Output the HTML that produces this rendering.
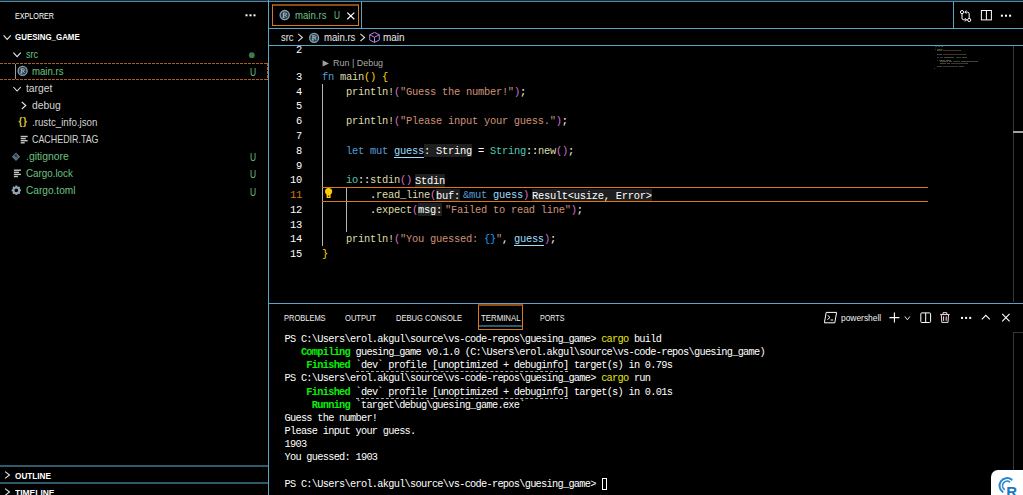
<!DOCTYPE html>
<html>
<head>
<meta charset="utf-8">
<title>main.rs - guesing_game</title>
<style>
*{box-sizing:border-box;margin:0;padding:0}
html,body{width:1023px;height:495px;overflow:hidden;background:#000;}
body{position:relative;font-family:"Liberation Sans",sans-serif;color:#fff;font-size:11px;}
.abs{position:absolute}
.ln{position:absolute;background:#5ba6c8}
.t{position:absolute;white-space:pre;line-height:1}
.sx{display:inline-block;transform-origin:0 50%;white-space:pre}
.row{position:absolute;left:0;width:268px;height:17px;font-size:11.5px;line-height:17px;white-space:pre}
.row .lbl{position:absolute;top:0;display:inline-block;transform:scaleX(.885);transform-origin:0 50%}
.g{color:#6cc080}
.badge{position:absolute;left:250px;top:0;font-size:10px;color:#6cc080}
.code{position:absolute;left:322px;font-family:"Liberation Mono",monospace;font-size:10.4px;letter-spacing:-0.24px;line-height:14.78px;height:14.78px;white-space:pre;color:#fff}
.num{position:absolute;left:270px;width:32px;text-align:right;font-family:"Liberation Mono",monospace;font-size:10.4px;letter-spacing:-0.24px;line-height:14.78px;height:14.78px;color:#fff}
.num.act{color:#d87a18}
.k{color:#569cd6}.s{color:#ce9178}.f{color:#dcdcaa}.ty{color:#4ec9b0}.v{color:#9cdcfe}
.b1{color:#ffd700}.b2{color:#da70d6}.b3{color:#179fff}
.hint{background:#1f1f1f;color:#fff;padding:0.5px 0}
.u{border-bottom:1px solid #9cdcfe}
.ml{margin-left:3px}.mr{margin-right:3px}
.term{position:absolute;left:284.5px;font-family:"Liberation Mono",monospace;font-size:10.3px;letter-spacing:-0.72px;line-height:13px;height:13px;white-space:pre;color:#fff}
.tg{color:#08f008;font-weight:bold}.ty2{color:#e5e510}
.du{border-bottom:1px dashed #aaa}
.cur{display:inline-block;width:5px;height:12px;border:1px solid #fff;vertical-align:-3px;margin-left:1px}
.ptab{position:absolute;top:313px;font-size:8.5px;line-height:10px;letter-spacing:-0.1px;color:#fff;white-space:pre}
svg{position:absolute;overflow:visible}
</style>
</head>
<body>
<div class="ln" style="left:0px;top:0px;width:1023px;height:1px;background:#1c2c34"></div>
<div class="ln" style="left:0px;top:1px;width:1023px;height:1px;background:#4b8ba6"></div>
<div class="ln" style="left:268px;top:0px;width:1px;height:495px"></div>
<div class="ln" style="left:269px;top:28px;width:754px;height:1px"></div>
<div class="ln" style="left:269px;top:45px;width:754px;height:1px"></div>
<div class="ln" style="left:269px;top:303px;width:754px;height:1px"></div>
<div class="ln" style="left:361px;top:2px;width:1px;height:26px"></div>
<div class="ln" style="left:953px;top:2px;width:1px;height:26px"></div>
<div class="ln" style="left:0px;top:465px;width:268px;height:2px;background:#2f5a6b"></div>
<div class="ln" style="left:0px;top:482px;width:268px;height:2px;background:#2f5a6b"></div>
<div class="t" style="left:15.00px;top:11.78px;font-size:9px;color:#fff;"><span class="sx" style="transform:scaleX(0.796)">EXPLORER</span></div>
<div class="t" style="left:15.00px;top:32.98px;font-size:9px;color:#fff;font-weight:bold;"><span class="sx" style="transform:scaleX(0.881)">GUESING_GAME</span></div>
<div class="t" style="left:25.70px;top:49.57px;font-size:10.2px;color:#6cc080;"><span class="sx" style="transform:scaleX(0.897)">src</span></div>
<div class="t" style="left:32.30px;top:66.67px;font-size:10.2px;color:#6cc080;"><span class="sx" style="transform:scaleX(0.945)">main.rs</span></div>
<div class="t" style="left:249.50px;top:68.18px;font-size:10.3px;color:#6cc080;"><span class="sx" style="transform:scaleX(0.820)">U</span></div>
<div class="t" style="left:26.00px;top:83.67px;font-size:10.2px;color:#d4d4d4;"><span class="sx" style="transform:scaleX(1.012)">target</span></div>
<div class="t" style="left:31.90px;top:100.67px;font-size:10.2px;color:#d4d4d4;"><span class="sx" style="transform:scaleX(1.015)">debug</span></div>
<div class="t" style="left:31.90px;top:117.87px;font-size:10.2px;color:#d4d4d4;"><span class="sx" style="transform:scaleX(0.955)">.rustc_info.json</span></div>
<div class="t" style="left:32.30px;top:134.97px;font-size:10.2px;color:#d4d4d4;"><span class="sx" style="transform:scaleX(0.873)">CACHEDIR.TAG</span></div>
<div class="t" style="left:25.70px;top:151.67px;font-size:10.2px;color:#6cc080;"><span class="sx" style="transform:scaleX(1.020)">.gitignore</span></div>
<div class="t" style="left:249.50px;top:153.18px;font-size:10.3px;color:#6cc080;"><span class="sx" style="transform:scaleX(0.820)">U</span></div>
<div class="t" style="left:25.70px;top:168.87px;font-size:10.2px;color:#6cc080;"><span class="sx" style="transform:scaleX(0.962)">Cargo.lock</span></div>
<div class="t" style="left:249.50px;top:170.38px;font-size:10.3px;color:#6cc080;"><span class="sx" style="transform:scaleX(0.820)">U</span></div>
<div class="t" style="left:25.70px;top:186.07px;font-size:10.2px;color:#6cc080;"><span class="sx" style="transform:scaleX(0.992)">Cargo.toml</span></div>
<div class="t" style="left:249.50px;top:187.58px;font-size:10.3px;color:#6cc080;"><span class="sx" style="transform:scaleX(0.820)">U</span></div>
<div class="t" style="left:15.00px;top:470.76px;font-size:9.5px;color:#fff;font-weight:bold;"><span class="sx" style="transform:scaleX(0.863)">OUTLINE</span></div>
<div class="t" style="left:15.00px;top:487.76px;font-size:9.5px;color:#fff;font-weight:bold;"><span class="sx" style="transform:scaleX(0.891)">TIMELINE</span></div>
<div class="abs" style="left:272px;top:4px;width:87px;height:22px;border:1px solid #d87a18;border-top:2px solid #8a4c10"></div>
<div class="t" style="left:294.50px;top:11.17px;font-size:10.2px;color:#6cc080;"><span class="sx" style="transform:scaleX(0.945)">main.rs</span></div>
<div class="t" style="left:333.60px;top:11.18px;font-size:10.3px;color:#6cc080;"><span class="sx" style="transform:scaleX(0.807)">U</span></div>
<div class="t" style="left:281.20px;top:33.23px;font-size:10px;color:#e8e8e8;"><span class="sx" style="transform:scaleX(0.938)">src</span></div>
<div class="t" style="left:323.80px;top:33.23px;font-size:10px;color:#e8e8e8;"><span class="sx" style="transform:scaleX(0.958)">main.rs</span></div>
<div class="t" style="left:383.20px;top:33.23px;font-size:10px;color:#e8e8e8;"><span class="sx" style="transform:scaleX(0.997)">main</span></div>
<div class="abs" style="left:322px;top:84px;width:1px;height:162px;background:#b4b4b4"></div>
<div class="abs" style="left:346px;top:188px;width:1px;height:44px;background:#b4b4b4"></div>
<div class="num" style="top:43.20px">2</div>
<div class="num" style="top:69.90px">3</div>
<div class="code" style="top:69.90px"><span class="k">fn</span> <span class="f">main</span><span class="b1">()</span> <span class="b1">{</span></div>
<div class="num" style="top:84.68px">4</div>
<div class="code" style="top:84.68px">    <span class="f">println!</span><span class="b2">(</span><span class="s">"Guess the number!"</span><span class="b2">)</span>;</div>
<div class="num" style="top:99.46px">5</div>
<div class="num" style="top:114.24px">6</div>
<div class="code" style="top:114.24px">    <span class="f">println!</span><span class="b2">(</span><span class="s">"Please input your guess."</span><span class="b2">)</span>;</div>
<div class="num" style="top:129.02px">7</div>
<div class="num" style="top:143.80px">8</div>
<div class="code" style="top:143.80px">    <span class="k">let</span> <span class="k">mut</span> <span class="v u">guess</span><span class="hint">: String</span> = <span class="ty">String</span>::<span class="f">new</span><span class="b2">()</span>;</div>
<div class="num" style="top:158.58px">9</div>
<div class="num" style="top:173.36px">10</div>
<div class="code" style="top:173.36px">    <span class="ty">io</span>::<span class="f">stdin</span><span class="b2">()</span><span class="hint ml">Stdin</span></div>
<div class="num act" style="top:188.14px">11</div>
<div class="code" style="top:188.14px">        .<span class="f">read_line</span><span class="b2">(</span><span class="hint mr">buf:</span><span class="k">&amp;mut</span> <span class="v u">guess</span><span class="b2">)</span><span class="hint ml">Result&lt;usize, Error&gt;</span></div>
<div class="num" style="top:202.92px">12</div>
<div class="code" style="top:202.92px">        .<span class="f">expect</span><span class="b2">(</span><span class="hint mr">msg:</span><span class="s">"Failed to read line"</span><span class="b2">)</span>;</div>
<div class="num" style="top:217.70px">13</div>
<div class="num" style="top:232.48px">14</div>
<div class="code" style="top:232.48px">    <span class="f">println!</span><span class="b2">(</span><span class="s">"You guessed: </span><span class="b3">{}</span><span class="s">"</span>, <span class="v u">guess</span><span class="b2">)</span>;</div>
<div class="num" style="top:247.26px">15</div>
<div class="code" style="top:247.26px"><span class="b1">}</span></div>
<div class="t" style="left:332.90px;top:57.97px;font-size:9.6px;color:#a8a8a8;"><span class="sx" style="transform:scaleX(0.933)">Run | Debug</span></div>
<div class="abs" style="left:322px;top:187px;width:606px;height:15px;border-top:1px solid #d87a18;border-bottom:1px solid #d87a18"></div>
<div class="term" style="top:333px">PS C:\Users\erol.akgul\source\vs-code-repos\guesing_game&gt; <span class="ty2">cargo</span> build</div>
<div class="term" style="top:346px">   <span class="tg">Compiling</span> guesing_game v0.1.0 (C:\Users\erol.akgul\source\vs-code-repos\guesing_game)</div>
<div class="term" style="top:359px">    <span class="tg">Finished</span> <span class="du">`dev` profile [unoptimized + debuginfo]</span> target(s) in 0.79s</div>
<div class="term" style="top:372px">PS C:\Users\erol.akgul\source\vs-code-repos\guesing_game&gt; <span class="ty2">cargo</span> run</div>
<div class="term" style="top:386px">    <span class="tg">Finished</span> <span class="du">`dev` profile [unoptimized + debuginfo]</span> target(s) in 0.01s</div>
<div class="term" style="top:399px">     <span class="tg">Running</span> `target\debug\guesing_game.exe`</div>
<div class="term" style="top:412px">Guess the number!</div>
<div class="term" style="top:425px">Please input your guess.</div>
<div class="term" style="top:438px">1903</div>
<div class="term" style="top:451px">You guessed: 1903</div>
<div class="term" style="top:478px">PS C:\Users\erol.akgul\source\vs-code-repos\guesing_game&gt; <span class="cur"></span></div>
<div class="t" style="left:284.40px;top:314.08px;font-size:9px;color:#f0f0f0;"><span class="sx" style="transform:scaleX(0.832)">PROBLEMS</span></div>
<div class="t" style="left:345.10px;top:314.08px;font-size:9px;color:#f0f0f0;"><span class="sx" style="transform:scaleX(0.841)">OUTPUT</span></div>
<div class="t" style="left:395.80px;top:314.08px;font-size:9px;color:#f0f0f0;"><span class="sx" style="transform:scaleX(0.841)">DEBUG CONSOLE</span></div>
<div class="t" style="left:480.90px;top:314.08px;font-size:9px;color:#f0f0f0;"><span class="sx" style="transform:scaleX(0.870)">TERMINAL</span></div>
<div class="t" style="left:539.50px;top:314.08px;font-size:9px;color:#f0f0f0;"><span class="sx" style="transform:scaleX(0.791)">PORTS</span></div>
<div class="abs" style="left:478px;top:304px;width:45px;height:26px;border:1px solid #d87a18;border-top:2px solid #8a4c10"></div>
<div class="abs" style="left:479px;top:325px;width:43px;height:2px;background:#2f5a6b"></div>
<div class="t" style="left:840.80px;top:314.25px;font-size:8.8px;color:#f0f0f0;"><span class="sx" style="transform:scaleX(0.956)">powershell</span></div>
<svg style="left:0px;top:0px" width="1" height="1" viewBox="0 0 1 1"><rect x="245.5" y="14.3" width="2" height="2" fill="#fff"/><rect x="249.5" y="14.3" width="2" height="2" fill="#fff"/><rect x="253.5" y="14.3" width="2" height="2" fill="#fff"/></svg>
<svg style="left:0px;top:0px" width="1" height="1" viewBox="0 0 1 1"><polyline points="3.6,35.4 7.2,39.4 10.8,35.4" fill="none" stroke="#e8e8e8" stroke-width="1.1"/></svg>
<svg style="left:0px;top:0px" width="1" height="1" viewBox="0 0 1 1"><polyline points="13.4,52.6 17.1,56.6 20.8,52.6" fill="none" stroke="#e8e8e8" stroke-width="1.1"/></svg>
<svg style="left:0px;top:0px" width="1" height="1" viewBox="0 0 1 1"><polyline points="13.4,87 17.1,91 20.8,87" fill="none" stroke="#e8e8e8" stroke-width="1.1"/></svg>
<svg style="left:0px;top:0px" width="1" height="1" viewBox="0 0 1 1"><polyline points="21.8,102 25.8,105.5 21.8,109" fill="none" stroke="#e8e8e8" stroke-width="1.1"/></svg>
<svg style="left:0px;top:0px" width="1" height="1" viewBox="0 0 1 1"><polyline points="5.1,471.6 9.5,475 5.1,478.4" fill="none" stroke="#e8e8e8" stroke-width="1.1"/></svg>
<svg style="left:0px;top:0px" width="1" height="1" viewBox="0 0 1 1"><polyline points="5.1,488.6 9.5,492 5.1,495.4" fill="none" stroke="#e8e8e8" stroke-width="1.1"/></svg>
<div class="abs" style="left:0;top:63px;width:268px;height:1px;background:repeating-linear-gradient(90deg,#b06014 0 3px,transparent 3px 4px)"></div>
<div class="abs" style="left:0;top:79px;width:268px;height:1px;background:repeating-linear-gradient(90deg,#b06014 0 3px,transparent 3px 4px)"></div>
<div class="abs" style="left:267px;top:63px;width:1px;height:17px;background:repeating-linear-gradient(180deg,#b06014 0 3px,transparent 3px 4px)"></div>
<div class="abs" style="left:15px;top:64px;width:1px;height:15px;background:#9a9a9a"></div>
<svg style="left:0px;top:0px" width="1" height="1" viewBox="0 0 1 1"><circle cx="251.8" cy="55.2" r="2.9" fill="#3d7a4e"/></svg>
<svg style="left:0px;top:0px" width="1" height="1" viewBox="0 0 1 1"><circle cx="22.6" cy="70.9" r="4.5" fill="#2b3e4a" stroke="#86a3b5" stroke-width="1.3"/><path d="M20.6 68.9 h2.8 a1 1 0 0 1 0 2 h-2.2 M21.4 68.9 v4.2 M23 70.9 l1.6 2.2 M20.2 73.1 h2.4" fill="none" stroke="#a9c0cc" stroke-width="0.9"/></svg>
<div class="t" style="left:18.5px;top:117px;font-size:10px;font-weight:bold;color:#d4c33a;letter-spacing:0.5px">{}</div>
<svg style="left:0px;top:0px" width="1" height="1" viewBox="0 0 1 1"><rect x="20.7" y="135.8" width="7" height="1.4" fill="#c4c4c4"/><rect x="20.7" y="137.9" width="5" height="1.4" fill="#c4c4c4"/><rect x="20.7" y="140" width="7" height="1.4" fill="#c4c4c4"/><rect x="20.7" y="142.1" width="4" height="1.4" fill="#c4c4c4"/></svg>
<svg style="left:0px;top:0px" width="1" height="1" viewBox="0 0 1 1"><rect x="13.9" y="169.5" width="7" height="1.4" fill="#c4c4c4"/><rect x="13.9" y="171.6" width="5" height="1.4" fill="#c4c4c4"/><rect x="13.9" y="173.7" width="7" height="1.4" fill="#c4c4c4"/><rect x="13.9" y="175.8" width="4" height="1.4" fill="#c4c4c4"/></svg>
<svg style="left:0px;top:0px" width="1" height="1" viewBox="0 0 1 1"><path d="M16 152.5 L20.2 156.7 L16 160.9 L11.8 156.7 Z" fill="#54707f"/><path d="M14.6 155 l2.6 2.6 M16 156.4 v-2" stroke="#000" stroke-width="0.8" fill="none"/></svg>
<svg style="left:0px;top:0px" width="1" height="1" viewBox="0 0 1 1"><circle cx="16.3" cy="190.3" r="2.9" fill="none" stroke="#93a7b3" stroke-width="2"/><g stroke="#93a7b3" stroke-width="1.8"><path d="M16.3 185.6v1.6M16.3 193.4v1.6M11.6 190.3h1.6M19.4 190.3h1.6M13 187l1.1 1.1M18.5 192.5l1.1 1.1M13 193.6l1.1-1.1M18.5 188.1l1.1-1.1"/></g></svg>
<svg style="left:0px;top:0px" width="1" height="1" viewBox="0 0 1 1"><circle cx="284.7" cy="15.1" r="4.6" fill="#2b3e4a" stroke="#86a3b5" stroke-width="1.3"/><path d="M282.7 13.1 h2.8 a1 1 0 0 1 0 2 h-2.2 M283.5 13.1 v4.2 M285.1 15.1 l1.6 2.2 M282.3 17.3 h2.4" fill="none" stroke="#a9c0cc" stroke-width="0.9"/></svg>
<svg style="left:0px;top:0px" width="1" height="1" viewBox="0 0 1 1"><path d="M347.3 12.6 L354.3 19.2 M354.3 12.6 L347.3 19.2" stroke="#fff" stroke-width="1.2" fill="none"/></svg>
<svg style="left:0px;top:0px" width="1" height="1" viewBox="0 0 1 1"><polyline points="298.2,33.8 302.4,37.5 298.2,41.2" fill="none" stroke="#e0e0e0" stroke-width="1.1"/></svg>
<svg style="left:0px;top:0px" width="1" height="1" viewBox="0 0 1 1"><polyline points="360.4,33.8 364.6,37.5 360.4,41.2" fill="none" stroke="#e0e0e0" stroke-width="1.1"/></svg>
<svg style="left:0px;top:0px" width="1" height="1" viewBox="0 0 1 1"><circle cx="314.1" cy="37.8" r="4.5" fill="#2b3e4a" stroke="#86a3b5" stroke-width="1.3"/><path d="M312.1 35.8 h2.8 a1 1 0 0 1 0 2 h-2.2 M312.9 35.8 v4.2 M314.5 37.8 l1.6 2.2 M311.7 40 h2.4" fill="none" stroke="#a9c0cc" stroke-width="0.9"/></svg>
<svg style="left:0px;top:0px" width="1" height="1" viewBox="0 0 1 1"><path d="M374.5 32.4 L379.3 34.8 V40 L374.5 42.4 L369.7 40 V34.8 Z M369.7 34.8 L374.5 37.2 L379.3 34.8 M374.5 37.2 V42.4" fill="none" stroke="#b180d7" stroke-width="1"/></svg>
<svg style="left:0px;top:0px" width="1" height="1" viewBox="0 0 1 1"><path d="M322.6 60.2 L329 63.4 L322.6 66.6 Z" fill="#a0a0a0"/></svg>
<svg style="left:0px;top:0px" width="1" height="1" viewBox="0 0 1 1"><path d="M325 191.7 a3.6 3.6 0 1 1 7.2 0 c0 1.7 -1.5 2.2 -1.6 3.4 v2.9 h-4 v-2.9 c-0.1 -1.2 -1.6 -1.7 -1.6 -3.4z" fill="#ffcc00"/><rect x="328" y="195.6" width="1.2" height="1.2" fill="#111"/></svg>
<svg style="left:0px;top:0px" width="1" height="1" viewBox="0 0 1 1"><g fill="none" stroke="#fff" stroke-width="1"><circle cx="962" cy="12.1" r="1.6"/><circle cx="969.2" cy="20" r="1.6"/><path d="M962 13.8 V18 Q962 19.8 963.8 19.8 H966.4 M965 18.2 L966.6 19.8 L965 21.4"/><path d="M969.2 18.3 V14 Q969.2 12.1 967.4 12.1 H965 M966.4 10.5 L964.8 12.1 L966.4 13.7"/></g></svg>
<svg style="left:0px;top:0px" width="1" height="1" viewBox="0 0 1 1"><g fill="none" stroke="#fff" stroke-width="1"><rect x="981.4" y="10.5" width="10" height="9.4"/><path d="M986.4 10.5 V19.9"/></g></svg>
<svg style="left:0px;top:0px" width="1" height="1" viewBox="0 0 1 1"><rect x="1000.9" y="14.7" width="2" height="2" fill="#fff"/><rect x="1005" y="14.7" width="2" height="2" fill="#fff"/><rect x="1009.1" y="14.7" width="2" height="2" fill="#fff"/></svg>
<svg style="left:0px;top:0px" width="1" height="1" viewBox="0 0 1 1"><g fill="none" stroke="#fff" stroke-width="1"><path d="M826.2 312.4 H836.6 L834.8 322.8 H824.4 Z"/><path d="M827.6 315.4 L830 317.4 L827.4 319.6 M830.6 320 H833.2"/></g></svg>
<svg style="left:0px;top:0px" width="1" height="1" viewBox="0 0 1 1"><path d="M889.4 317.6 H899.4 M894.4 312.6 V322.6" stroke="#fff" stroke-width="1.1" fill="none"/></svg>
<svg style="left:0px;top:0px" width="1" height="1" viewBox="0 0 1 1"><polyline points="904.8,316.4 907.4,319.8 910,316.4" fill="none" stroke="#e0e0e0" stroke-width="1"/></svg>
<svg style="left:0px;top:0px" width="1" height="1" viewBox="0 0 1 1"><g fill="none" stroke="#fff" stroke-width="1"><rect x="920.8" y="312.9" width="9.8" height="9.6" rx="1"/><path d="M925.7 312.9 V322.5"/></g></svg>
<svg style="left:0px;top:0px" width="1" height="1" viewBox="0 0 1 1"><g fill="none" stroke="#f4dcea" stroke-width="1"><path d="M940.2 314.6 H949.6 M943 314.4 V312.7 H946.8 V314.4 M941.3 314.8 L941.8 322.4 H948 L948.5 314.8 M943.6 316.4 V320.8 M946.2 316.4 V320.8"/></g></svg>
<svg style="left:0px;top:0px" width="1" height="1" viewBox="0 0 1 1"><rect x="961" y="316.9" width="2" height="2" fill="#fff"/><rect x="965.1" y="316.9" width="2" height="2" fill="#fff"/><rect x="969.2" y="316.9" width="2" height="2" fill="#fff"/></svg>
<svg style="left:0px;top:0px" width="1" height="1" viewBox="0 0 1 1"><polyline points="981.8,319.4 985.8,315.4 989.8,319.4" fill="none" stroke="#fff" stroke-width="1.1"/></svg>
<svg style="left:0px;top:0px" width="1" height="1" viewBox="0 0 1 1"><path d="M1002.2 313.9 L1009.6 321.3 M1009.6 313.9 L1002.2 321.3" stroke="#fff" stroke-width="1.1" fill="none"/></svg>
<div class="abs" style="left:1013px;top:46px;width:1px;height:256px;background:#363636"></div>
<div class="abs" style="left:1013px;top:131px;width:10px;height:2px;background:#a0a0a0"></div>
<div class="abs" style="left:1013px;top:332px;width:11px;height:140px;border-left:1px solid #363636;border-top:1px solid #363636"></div>
<div class="abs" style="left:991px;top:470px;width:40px;height:30px;background:#fff;border-radius:7px 0 0 0"></div>
<svg style="left:0px;top:0px" width="1" height="1" viewBox="0 0 1 1"><g fill="none" stroke="#2a86cf" stroke-linecap="round"><path d="M1002.6 491.8 A7.6 7.6 0 0 1 1011.7 479.6" stroke-width="2"/><path d="M1004.3 489.3 A4.6 4.6 0 0 1 1009.6 481.8" stroke-width="1.6"/></g><text x="1006.2" y="496.5" font-family="Liberation Sans" font-weight="bold" font-size="15" fill="#1976c2">R</text></svg>
<div class="abs" style="left:934.5px;top:46.3px;width:2px;height:1px;opacity:.62;background:#2f5a74"></div>
<div class="abs" style="left:937.5px;top:46.3px;width:2.5px;height:1px;opacity:.62;background:#2c6e62"></div>
<div class="abs" style="left:941px;top:46.3px;width:2.4px;height:1px;opacity:.62;background:#2c6e62"></div>
<div class="abs" style="left:934.5px;top:48.7px;width:1.5px;height:1px;opacity:.62;background:#2f5a74"></div>
<div class="abs" style="left:936.8px;top:48.7px;width:2.8px;height:1px;opacity:.62;background:#6e6e4a"></div>
<div class="abs" style="left:940px;top:48.7px;width:2.5px;height:1px;opacity:.62;background:#6a5a10"></div>
<div class="abs" style="left:936.9px;top:50.3px;width:5.6px;height:1px;opacity:.62;background:#6e6e4a"></div>
<div class="abs" style="left:943px;top:50.3px;width:15.5px;height:1px;opacity:.62;background:#6e5038"></div>
<div class="abs" style="left:958.5px;top:50.3px;width:2.1px;height:1px;opacity:.62;background:#6c6c6c"></div>
<div class="abs" style="left:936.9px;top:53.8px;width:5.6px;height:1px;opacity:.62;background:#6e6e4a"></div>
<div class="abs" style="left:943px;top:53.8px;width:21px;height:1px;opacity:.62;background:#6e5038"></div>
<div class="abs" style="left:964px;top:53.8px;width:2px;height:1px;opacity:.62;background:#6c6c6c"></div>
<div class="abs" style="left:936.9px;top:56.8px;width:2.6px;height:1px;opacity:.62;background:#2f5a74"></div>
<div class="abs" style="left:940.2px;top:56.8px;width:2.4px;height:1px;opacity:.62;background:#2f5a74"></div>
<div class="abs" style="left:943.5px;top:56.8px;width:10.5px;height:1px;opacity:.62;background:#6c6c6c"></div>
<div class="abs" style="left:956px;top:56.8px;width:5px;height:1px;opacity:.62;background:#2c6e62"></div>
<div class="abs" style="left:961.5px;top:56.8px;width:5.3px;height:1px;opacity:.62;background:#6e6e4a"></div>
<div class="abs" style="left:936.9px;top:59.8px;width:1.6px;height:1px;opacity:.62;background:#2c6e62"></div>
<div class="abs" style="left:939px;top:59.8px;width:6px;height:1px;opacity:.62;background:#6e6e4a"></div>
<div class="abs" style="left:945.5px;top:59.8px;width:5px;height:1px;opacity:.62;background:#6c6c6c"></div>
<div class="abs" style="left:940px;top:61.3px;width:8px;height:1px;opacity:.62;background:#6e6e4a"></div>
<div class="abs" style="left:948.5px;top:61.3px;width:3.5px;height:1px;opacity:.62;background:#6c6c6c"></div>
<div class="abs" style="left:952.5px;top:61.3px;width:3px;height:1px;opacity:.62;background:#2f5a74"></div>
<div class="abs" style="left:956px;top:61.3px;width:4px;height:1px;opacity:.62;background:#4a6a7a"></div>
<div class="abs" style="left:961px;top:61.3px;width:16.8px;height:1px;opacity:.62;background:#6c6c6c"></div>
<div class="abs" style="left:940px;top:63.4px;width:6px;height:1px;opacity:.62;background:#6e6e4a"></div>
<div class="abs" style="left:946.5px;top:63.4px;width:3.5px;height:1px;opacity:.62;background:#6c6c6c"></div>
<div class="abs" style="left:950.5px;top:63.4px;width:15.5px;height:1px;opacity:.62;background:#6e5038"></div>
<div class="abs" style="left:966px;top:63.4px;width:1.8px;height:1px;opacity:.62;background:#6c6c6c"></div>
<div class="abs" style="left:936.9px;top:66.1px;width:5.6px;height:1px;opacity:.62;background:#6e6e4a"></div>
<div class="abs" style="left:943px;top:66.1px;width:12.5px;height:1px;opacity:.62;background:#6e5038"></div>
<div class="abs" style="left:956px;top:66.1px;width:1.5px;height:1px;opacity:.62;background:#2f5a74"></div>
<div class="abs" style="left:959px;top:66.1px;width:5.4px;height:1px;opacity:.62;background:#4a6a7a"></div>
<div class="abs" style="left:934.3px;top:67.8px;width:1px;height:1px;opacity:.62;background:#6a5a10"></div>
</body>
</html>
